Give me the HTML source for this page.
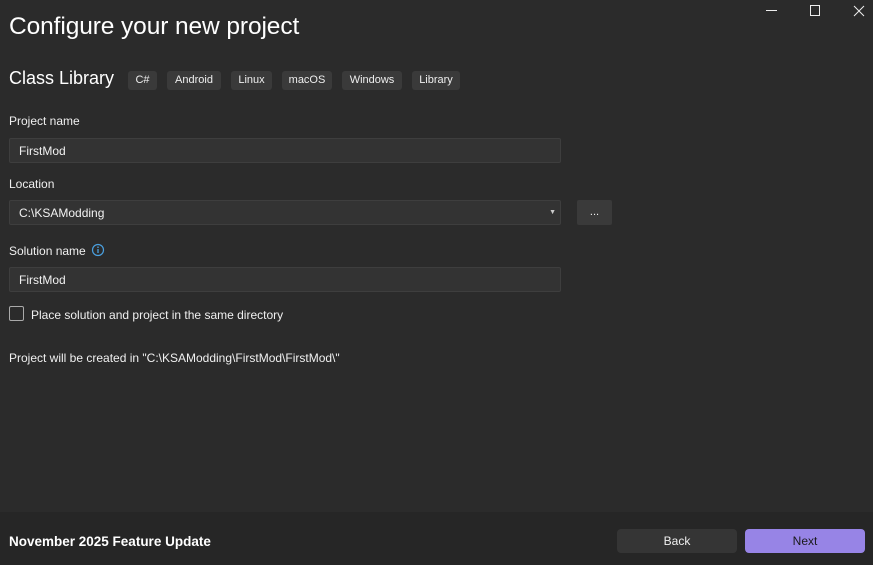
<!DOCTYPE html>
<html><head><style>
*{margin:0;padding:0;box-sizing:border-box}
body{width:873px;height:565px;background:#2b2b2b;font-family:"Segoe UI","Liberation Sans",sans-serif;color:#f0f0f0;position:relative;overflow:hidden;font-size:12px}
.a{position:absolute}
h1{position:absolute;left:9px;top:13px;font-size:24.5px;font-weight:400;color:#fff;letter-spacing:-0.1px}
.tag{position:absolute;top:71px;height:19px;background:#3a3a3a;border-radius:3px;font-size:11px;line-height:19px;text-align:center;color:#eee}
.in{position:absolute;left:9px;width:552px;height:25px;background:#333;border:1px solid #3e3e3e;border-radius:2px;padding-left:9px;line-height:24px;font-size:12px;color:#f2f2f2}
.lbl{position:absolute;left:9px;font-size:12px;color:#f0f0f0}
.foot{position:absolute;left:0;top:512px;width:873px;height:53px;background:#262626}
.btn{position:absolute;top:529px;height:24px;border-radius:4px;font-size:12px;line-height:25px;text-align:center}
</style></head><body>
<h1>Configure your new project</h1>
<svg class="a" style="left:760px;top:0" width="113" height="24"><g stroke="#eee" stroke-width="1" fill="none"><line x1="6" y1="10.5" x2="17" y2="10.5"/><rect x="50.5" y="5.5" width="9" height="10"/><path d="M94 6L104 16M104 6L94 16"/></g></svg>
<div class="a" style="left:9px;top:68px;font-size:18px;color:#fff">Class Library</div>
<div class="tag" style="left:128px;width:29px">C#</div>
<div class="tag" style="left:167px;width:54px">Android</div>
<div class="tag" style="left:231px;width:41px">Linux</div>
<div class="tag" style="left:282px;width:50px">macOS</div>
<div class="tag" style="left:342px;width:60px">Windows</div>
<div class="tag" style="left:412px;width:48px">Library</div>
<div class="lbl" style="top:114px">Project name</div>
<div class="in" style="top:138px">FirstMod</div>
<div class="lbl" style="top:177px">Location</div>
<div class="in" style="top:200px">C:\KSAModding<span class="a" style="right:4px;top:0;font-size:7px;color:#ccc">▼</span></div>
<div class="a" style="left:577px;top:200px;width:35px;height:25px;background:#3a3a3a;border-radius:2px;text-align:center;line-height:24px;font-size:11px">...</div>
<div class="lbl" style="top:244px">Solution name</div>
<svg class="a" style="left:91px;top:243px" width="14" height="14"><circle cx="7" cy="7" r="5.5" stroke="#4aa0e0" fill="none" stroke-width="1.2"/><line x1="7" y1="6" x2="7" y2="10" stroke="#4aa0e0" stroke-width="1.3"/><circle cx="7" cy="4.2" r=".8" fill="#4aa0e0"/></svg>
<div class="in" style="top:267px">FirstMod</div>
<div class="a" style="left:9px;top:306px;width:15px;height:15px;border:1px solid #aaa;border-radius:2px"></div>
<div class="lbl" style="left:31px;top:308px">Place solution and project in the same directory</div>
<div class="lbl" style="top:351px">Project will be created in "C:\KSAModding\FirstMod\FirstMod\"</div>
<div class="foot"></div>
<div class="a" style="left:9px;top:534px;font-size:13.5px;font-weight:bold;color:#fff">November 2025 Feature Update</div>
<div class="btn" style="left:617px;width:120px;background:#353535;color:#f0f0f0">Back</div>
<div class="btn" style="left:745px;width:120px;background:#9784e6;color:#1a1a1a">Next</div>
</body></html>
